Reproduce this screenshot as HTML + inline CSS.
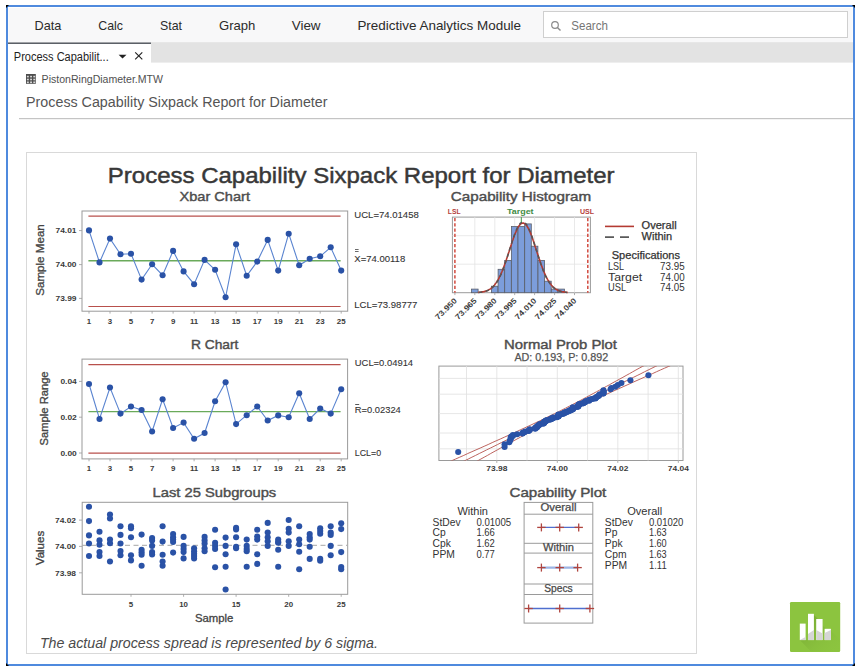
<!DOCTYPE html><html><head><meta charset="utf-8"><style>
html,body{margin:0;padding:0;background:#fff;width:860px;height:671px;overflow:hidden}
svg{display:block}
text{font-family:"Liberation Sans", sans-serif}
</style></head><body>
<svg width="860" height="671" viewBox="0 0 860 671">
<rect x="0" y="0" width="860" height="671" fill="#ffffff"/>
<rect x="8" y="7" width="845" height="36" fill="#ffffff"/><rect x="8.5" y="8" width="844" height="35" fill="#f8f8f9"/>
<rect x="151" y="42.2" width="702" height="20.4" fill="#e3e3e3"/>
<rect x="8" y="42.5" width="143" height="1.4" fill="#4a4f57"/>
<text x="34.5" y="29.5" font-size="13" fill="#2b2b2b" textLength="26.8" lengthAdjust="spacingAndGlyphs">Data</text>
<text x="98.3" y="29.5" font-size="13" fill="#2b2b2b" textLength="24.7" lengthAdjust="spacingAndGlyphs">Calc</text>
<text x="160" y="29.5" font-size="13" fill="#2b2b2b" textLength="22.0" lengthAdjust="spacingAndGlyphs">Stat</text>
<text x="219" y="29.5" font-size="13" fill="#2b2b2b" textLength="36.4" lengthAdjust="spacingAndGlyphs">Graph</text>
<text x="291.7" y="29.5" font-size="13" fill="#2b2b2b" textLength="28.9" lengthAdjust="spacingAndGlyphs">View</text>
<text x="357.4" y="29.5" font-size="13" fill="#2b2b2b" textLength="163.7" lengthAdjust="spacingAndGlyphs">Predictive Analytics Module</text>
<rect x="543.5" y="11.5" width="304" height="26" fill="#ffffff" stroke="#cfcfcf" stroke-width="1"/>
<circle cx="555" cy="25" r="3.3" fill="none" stroke="#8a8a8a" stroke-width="1.2"/><line x1="557.4" y1="27.4" x2="560.5" y2="30.5" stroke="#8a8a8a" stroke-width="1.4"/>
<text x="571.3" y="30.3" font-size="13" fill="#767676" textLength="36.6" lengthAdjust="spacingAndGlyphs">Search</text>
<text x="13.8" y="60.6" font-size="12.5" fill="#1e1e1e" textLength="94.9" lengthAdjust="spacingAndGlyphs">Process Capabilit...</text>
<path d="M118.6 54.7 L126.5 54.7 L122.55 58.5 Z" fill="#222"/>
<path d="M135.2 52.4 L142.3 59.4 M142.3 52.4 L135.2 59.4" stroke="#222" stroke-width="1.15"/>
<rect x="26" y="74" width="9.8" height="9.8" fill="#4d4d4d"/><rect x="26.9" y="75.8" width="1.9" height="1.6" fill="#d8d8d8"/><rect x="26.9" y="78.7" width="1.9" height="1.6" fill="#d8d8d8"/><rect x="26.9" y="81.5" width="1.9" height="1.6" fill="#d8d8d8"/><rect x="30.1" y="75.8" width="1.9" height="1.6" fill="#d8d8d8"/><rect x="30.1" y="78.7" width="1.9" height="1.6" fill="#d8d8d8"/><rect x="30.1" y="81.5" width="1.9" height="1.6" fill="#d8d8d8"/><rect x="33.3" y="75.8" width="1.9" height="1.6" fill="#d8d8d8"/><rect x="33.3" y="78.7" width="1.9" height="1.6" fill="#d8d8d8"/><rect x="33.3" y="81.5" width="1.9" height="1.6" fill="#d8d8d8"/>
<text x="41.6" y="82.8" font-size="11.2" fill="#505050" textLength="121.4" lengthAdjust="spacingAndGlyphs">PistonRingDiameter.MTW</text>
<text x="26.1" y="107.1" font-size="15.2" fill="#555555" textLength="301.4" lengthAdjust="spacingAndGlyphs">Process Capability Sixpack Report for Diameter</text>
<rect x="19" y="118" width="834" height="1.2" fill="#c4c4c4"/>
<rect x="26.5" y="152.5" width="670" height="501" fill="#ffffff" stroke="#d9d9d9" stroke-width="1"/>
<rect x="7" y="6" width="847" height="659" fill="none" stroke="#4f8ade" stroke-width="2"/>
<polygon points="6,5 9,5 6,8" fill="#000"/>
<polygon points="855,5 852,5 855,8" fill="#000"/>
<polygon points="6,666 9,666 6,663" fill="#000"/>
<polygon points="855,666 852,666 855,663" fill="#000"/>
<rect x="790" y="602" width="50.2" height="50" rx="1.2" fill="#8cc43f"/>
<defs><linearGradient id="shd" x1="0" y1="0" x2="1" y2="1"><stop offset="0" stop-color="#6a9a2c" stop-opacity="0.8"/><stop offset="1" stop-color="#8cc43f" stop-opacity="0"/></linearGradient></defs>
<path d="M799.8 640.1 L811 651.5 L840.2 651.5 L840.2 640 L830.9 630.7 L830.9 628.8 L826 628.8 L822.6 625.4 L822.6 619 L818 619 L813.9 614.9 L813.9 640.1 Z" fill="url(#shd)"/>
<rect x="799.8" y="623.6" width="5.8" height="16.5" fill="#ffffff"/>
<rect x="808" y="613.8" width="5.9" height="26.3" fill="#ffffff"/>
<rect x="816.2" y="619" width="6.4" height="21.1" fill="#ffffff"/>
<rect x="824.6" y="628.8" width="6.3" height="11.3" fill="#ffffff"/>
<path d="M799.8 640.1 L805.6 637 L805.6 640.1 Z M808 640.1 L808 634 L813.9 630 L813.9 640.1 Z M816.2 640.1 L816.2 630 L822.6 633.5 L822.6 640.1 Z M824.6 640.1 L824.6 633 L830.9 630 L830.9 640.1 Z" fill="#d5d5d5"/>
<text x="107.8" y="183.3" font-size="22" stroke="#383838" stroke-width="0.45" text-anchor="start" fill="#383838" textLength="506.7" lengthAdjust="spacingAndGlyphs">Process Capability Sixpack Report for Diameter</text>
<text x="179.5" y="201.2" font-size="12.8" stroke="#4d4d4d" stroke-width="0.4" text-anchor="start" fill="#4d4d4d" textLength="70.5" lengthAdjust="spacingAndGlyphs">Xbar Chart</text>
<text x="450.8" y="201.4" font-size="12.8" stroke="#4d4d4d" stroke-width="0.4" text-anchor="start" fill="#4d4d4d" textLength="140.3" lengthAdjust="spacingAndGlyphs">Capability Histogram</text>
<text x="190.9" y="348.7" font-size="12.8" stroke="#4d4d4d" stroke-width="0.4" text-anchor="start" fill="#4d4d4d" textLength="47.5" lengthAdjust="spacingAndGlyphs">R Chart</text>
<text x="504.0" y="348.9" font-size="12.8" stroke="#4d4d4d" stroke-width="0.4" text-anchor="start" fill="#4d4d4d" textLength="113.0" lengthAdjust="spacingAndGlyphs">Normal Prob Plot</text>
<text x="514.4" y="361.0" font-size="10.5" stroke="#555" stroke-width="0.25" text-anchor="start" fill="#555" textLength="93.8" lengthAdjust="spacingAndGlyphs">AD: 0.193, P: 0.892</text>
<text x="152.5" y="496.7" font-size="12.8" stroke="#4d4d4d" stroke-width="0.4" text-anchor="start" fill="#4d4d4d" textLength="123.7" lengthAdjust="spacingAndGlyphs">Last 25 Subgroups</text>
<text x="509.5" y="497.0" font-size="12.8" stroke="#4d4d4d" stroke-width="0.4" text-anchor="start" fill="#4d4d4d" textLength="96.8" lengthAdjust="spacingAndGlyphs">Capability Plot</text>
<rect x="82" y="211" width="265.7" height="100.2" fill="#fff" stroke="#9a9a9a" stroke-width="1"/>
<line x1="88.4" y1="216.1" x2="340.6" y2="216.1" stroke="#b8504c" stroke-width="1.2"/>
<line x1="88.4" y1="306.5" x2="340.6" y2="306.5" stroke="#b8504c" stroke-width="1.2"/>
<line x1="88.4" y1="260.7" x2="340.6" y2="260.7" stroke="#6aaa5a" stroke-width="1.4"/>
<polyline points="89.0,230.4 99.5,262.4 110.0,238.6 120.5,254.2 131.0,253.7 141.6,279.6 152.1,264.3 162.6,275.2 173.1,250.9 183.6,271.4 194.1,284.2 204.6,259.9 215.1,269.8 225.6,297.3 236.1,244.3 246.7,275.8 257.2,261.6 267.7,239.9 278.2,270.6 288.7,233.7 299.2,265.3 309.7,258.8 320.2,256.3 330.7,247.3 341.2,270.6" fill="none" stroke="#5a84d0" stroke-width="1.1"/>
<circle cx="89.0" cy="230.4" r="3.05" fill="#2a52a6"/>
<circle cx="99.5" cy="262.4" r="3.05" fill="#2a52a6"/>
<circle cx="110.0" cy="238.6" r="3.05" fill="#2a52a6"/>
<circle cx="120.5" cy="254.2" r="3.05" fill="#2a52a6"/>
<circle cx="131.0" cy="253.7" r="3.05" fill="#2a52a6"/>
<circle cx="141.6" cy="279.6" r="3.05" fill="#2a52a6"/>
<circle cx="152.1" cy="264.3" r="3.05" fill="#2a52a6"/>
<circle cx="162.6" cy="275.2" r="3.05" fill="#2a52a6"/>
<circle cx="173.1" cy="250.9" r="3.05" fill="#2a52a6"/>
<circle cx="183.6" cy="271.4" r="3.05" fill="#2a52a6"/>
<circle cx="194.1" cy="284.2" r="3.05" fill="#2a52a6"/>
<circle cx="204.6" cy="259.9" r="3.05" fill="#2a52a6"/>
<circle cx="215.1" cy="269.8" r="3.05" fill="#2a52a6"/>
<circle cx="225.6" cy="297.3" r="3.05" fill="#2a52a6"/>
<circle cx="236.1" cy="244.3" r="3.05" fill="#2a52a6"/>
<circle cx="246.7" cy="275.8" r="3.05" fill="#2a52a6"/>
<circle cx="257.2" cy="261.6" r="3.05" fill="#2a52a6"/>
<circle cx="267.7" cy="239.9" r="3.05" fill="#2a52a6"/>
<circle cx="278.2" cy="270.6" r="3.05" fill="#2a52a6"/>
<circle cx="288.7" cy="233.7" r="3.05" fill="#2a52a6"/>
<circle cx="299.2" cy="265.3" r="3.05" fill="#2a52a6"/>
<circle cx="309.7" cy="258.8" r="3.05" fill="#2a52a6"/>
<circle cx="320.2" cy="256.3" r="3.05" fill="#2a52a6"/>
<circle cx="330.7" cy="247.3" r="3.05" fill="#2a52a6"/>
<circle cx="341.2" cy="270.6" r="3.05" fill="#2a52a6"/>
<line x1="79" y1="230.6" x2="82" y2="230.6" stroke="#9a9a9a" stroke-width="0.8"/>
<text x="76.5" y="233.3" font-size="7.9" font-weight="bold" text-anchor="end" fill="#3a3a3a" textLength="21.0" lengthAdjust="spacingAndGlyphs">74.01</text>
<line x1="79" y1="264.6" x2="82" y2="264.6" stroke="#9a9a9a" stroke-width="0.8"/>
<text x="76.5" y="267.3" font-size="7.9" font-weight="bold" text-anchor="end" fill="#3a3a3a" textLength="21.0" lengthAdjust="spacingAndGlyphs">74.00</text>
<line x1="79" y1="298.4" x2="82" y2="298.4" stroke="#9a9a9a" stroke-width="0.8"/>
<text x="76.5" y="301.1" font-size="7.9" font-weight="bold" text-anchor="end" fill="#3a3a3a" textLength="21.0" lengthAdjust="spacingAndGlyphs">73.99</text>
<line x1="89.0" y1="311.2" x2="89.0" y2="313.6" stroke="#9a9a9a" stroke-width="0.8"/>
<text x="89.0" y="324.0" font-size="7.9" font-weight="bold" text-anchor="middle" fill="#3a3a3a">1</text>
<line x1="110.0" y1="311.2" x2="110.0" y2="313.6" stroke="#9a9a9a" stroke-width="0.8"/>
<text x="110.0" y="324.0" font-size="7.9" font-weight="bold" text-anchor="middle" fill="#3a3a3a">3</text>
<line x1="131.0" y1="311.2" x2="131.0" y2="313.6" stroke="#9a9a9a" stroke-width="0.8"/>
<text x="131.0" y="324.0" font-size="7.9" font-weight="bold" text-anchor="middle" fill="#3a3a3a">5</text>
<line x1="152.1" y1="311.2" x2="152.1" y2="313.6" stroke="#9a9a9a" stroke-width="0.8"/>
<text x="152.1" y="324.0" font-size="7.9" font-weight="bold" text-anchor="middle" fill="#3a3a3a">7</text>
<line x1="173.1" y1="311.2" x2="173.1" y2="313.6" stroke="#9a9a9a" stroke-width="0.8"/>
<text x="173.1" y="324.0" font-size="7.9" font-weight="bold" text-anchor="middle" fill="#3a3a3a">9</text>
<line x1="194.1" y1="311.2" x2="194.1" y2="313.6" stroke="#9a9a9a" stroke-width="0.8"/>
<text x="194.1" y="324.0" font-size="7.9" font-weight="bold" text-anchor="middle" fill="#3a3a3a">11</text>
<line x1="215.1" y1="311.2" x2="215.1" y2="313.6" stroke="#9a9a9a" stroke-width="0.8"/>
<text x="215.1" y="324.0" font-size="7.9" font-weight="bold" text-anchor="middle" fill="#3a3a3a">13</text>
<line x1="236.1" y1="311.2" x2="236.1" y2="313.6" stroke="#9a9a9a" stroke-width="0.8"/>
<text x="236.1" y="324.0" font-size="7.9" font-weight="bold" text-anchor="middle" fill="#3a3a3a">15</text>
<line x1="257.2" y1="311.2" x2="257.2" y2="313.6" stroke="#9a9a9a" stroke-width="0.8"/>
<text x="257.2" y="324.0" font-size="7.9" font-weight="bold" text-anchor="middle" fill="#3a3a3a">17</text>
<line x1="278.2" y1="311.2" x2="278.2" y2="313.6" stroke="#9a9a9a" stroke-width="0.8"/>
<text x="278.2" y="324.0" font-size="7.9" font-weight="bold" text-anchor="middle" fill="#3a3a3a">19</text>
<line x1="299.2" y1="311.2" x2="299.2" y2="313.6" stroke="#9a9a9a" stroke-width="0.8"/>
<text x="299.2" y="324.0" font-size="7.9" font-weight="bold" text-anchor="middle" fill="#3a3a3a">21</text>
<line x1="320.2" y1="311.2" x2="320.2" y2="313.6" stroke="#9a9a9a" stroke-width="0.8"/>
<text x="320.2" y="324.0" font-size="7.9" font-weight="bold" text-anchor="middle" fill="#3a3a3a">23</text>
<line x1="341.2" y1="311.2" x2="341.2" y2="313.6" stroke="#9a9a9a" stroke-width="0.8"/>
<text x="341.2" y="324.0" font-size="7.9" font-weight="bold" text-anchor="middle" fill="#3a3a3a">25</text>
<text x="0.0" y="0.0" font-size="10.5" stroke="#444" stroke-width="0.3" text-anchor="middle" fill="#444" textLength="71.6" lengthAdjust="spacingAndGlyphs" transform="translate(44.3,260) rotate(-90)">Sample Mean</text>
<text x="354.3" y="218.0" font-size="9.6" stroke="#333" stroke-width="0.1" text-anchor="start" fill="#333" textLength="64.5" lengthAdjust="spacingAndGlyphs">UCL=74.01458</text>
<text x="354.3" y="262.3" font-size="9.6" stroke="#333" stroke-width="0.1" text-anchor="start" fill="#333" textLength="50.9" lengthAdjust="spacingAndGlyphs">X=74.00118</text>
<line x1="355" y1="251.5" x2="358.6" y2="251.5" stroke="#444" stroke-width="0.8"/><line x1="355" y1="249.5" x2="358.6" y2="249.5" stroke="#444" stroke-width="0.8"/>
<text x="354.3" y="307.5" font-size="9.6" stroke="#333" stroke-width="0.1" text-anchor="start" fill="#333" textLength="63.1" lengthAdjust="spacingAndGlyphs">LCL=73.98777</text>
<rect x="82" y="359.1" width="265.6" height="99.8" fill="#fff" stroke="#9a9a9a" stroke-width="1"/>
<line x1="88.4" y1="364.7" x2="340.6" y2="364.7" stroke="#b8504c" stroke-width="1.2"/>
<line x1="88.4" y1="453.2" x2="340.6" y2="453.2" stroke="#b8504c" stroke-width="1.2"/>
<line x1="88.4" y1="411.6" x2="340.6" y2="411.6" stroke="#6aaa5a" stroke-width="1.4"/>
<polyline points="89.0,384 99.5,419 110.0,387.5 120.5,413.6 131.0,406.5 141.6,410 152.1,431.5 162.6,399.3 173.1,428 183.6,422.6 194.1,438.7 204.6,433 215.1,401.3 225.6,382.2 236.1,424.1 246.7,415.2 257.2,406.5 267.7,420.5 278.2,415.4 288.7,417.2 299.2,393.2 309.7,419 320.2,408.5 330.7,413.6 341.2,389.3" fill="none" stroke="#5a84d0" stroke-width="1.1"/>
<circle cx="89.0" cy="384" r="3.05" fill="#2a52a6"/>
<circle cx="99.5" cy="419" r="3.05" fill="#2a52a6"/>
<circle cx="110.0" cy="387.5" r="3.05" fill="#2a52a6"/>
<circle cx="120.5" cy="413.6" r="3.05" fill="#2a52a6"/>
<circle cx="131.0" cy="406.5" r="3.05" fill="#2a52a6"/>
<circle cx="141.6" cy="410" r="3.05" fill="#2a52a6"/>
<circle cx="152.1" cy="431.5" r="3.05" fill="#2a52a6"/>
<circle cx="162.6" cy="399.3" r="3.05" fill="#2a52a6"/>
<circle cx="173.1" cy="428" r="3.05" fill="#2a52a6"/>
<circle cx="183.6" cy="422.6" r="3.05" fill="#2a52a6"/>
<circle cx="194.1" cy="438.7" r="3.05" fill="#2a52a6"/>
<circle cx="204.6" cy="433" r="3.05" fill="#2a52a6"/>
<circle cx="215.1" cy="401.3" r="3.05" fill="#2a52a6"/>
<circle cx="225.6" cy="382.2" r="3.05" fill="#2a52a6"/>
<circle cx="236.1" cy="424.1" r="3.05" fill="#2a52a6"/>
<circle cx="246.7" cy="415.2" r="3.05" fill="#2a52a6"/>
<circle cx="257.2" cy="406.5" r="3.05" fill="#2a52a6"/>
<circle cx="267.7" cy="420.5" r="3.05" fill="#2a52a6"/>
<circle cx="278.2" cy="415.4" r="3.05" fill="#2a52a6"/>
<circle cx="288.7" cy="417.2" r="3.05" fill="#2a52a6"/>
<circle cx="299.2" cy="393.2" r="3.05" fill="#2a52a6"/>
<circle cx="309.7" cy="419" r="3.05" fill="#2a52a6"/>
<circle cx="320.2" cy="408.5" r="3.05" fill="#2a52a6"/>
<circle cx="330.7" cy="413.6" r="3.05" fill="#2a52a6"/>
<circle cx="341.2" cy="389.3" r="3.05" fill="#2a52a6"/>
<line x1="79" y1="381.4" x2="82" y2="381.4" stroke="#9a9a9a" stroke-width="0.8"/>
<text x="76.8" y="384.1" font-size="7.9" font-weight="bold" text-anchor="end" fill="#3a3a3a" textLength="16.4" lengthAdjust="spacingAndGlyphs">0.04</text>
<line x1="79" y1="417.2" x2="82" y2="417.2" stroke="#9a9a9a" stroke-width="0.8"/>
<text x="76.8" y="419.9" font-size="7.9" font-weight="bold" text-anchor="end" fill="#3a3a3a" textLength="16.4" lengthAdjust="spacingAndGlyphs">0.02</text>
<line x1="79" y1="453" x2="82" y2="453" stroke="#9a9a9a" stroke-width="0.8"/>
<text x="76.8" y="455.7" font-size="7.9" font-weight="bold" text-anchor="end" fill="#3a3a3a" textLength="16.4" lengthAdjust="spacingAndGlyphs">0.00</text>
<line x1="89.0" y1="458.9" x2="89.0" y2="461.3" stroke="#9a9a9a" stroke-width="0.8"/>
<text x="89.0" y="471.2" font-size="7.9" font-weight="bold" text-anchor="middle" fill="#3a3a3a">1</text>
<line x1="110.0" y1="458.9" x2="110.0" y2="461.3" stroke="#9a9a9a" stroke-width="0.8"/>
<text x="110.0" y="471.2" font-size="7.9" font-weight="bold" text-anchor="middle" fill="#3a3a3a">3</text>
<line x1="131.0" y1="458.9" x2="131.0" y2="461.3" stroke="#9a9a9a" stroke-width="0.8"/>
<text x="131.0" y="471.2" font-size="7.9" font-weight="bold" text-anchor="middle" fill="#3a3a3a">5</text>
<line x1="152.1" y1="458.9" x2="152.1" y2="461.3" stroke="#9a9a9a" stroke-width="0.8"/>
<text x="152.1" y="471.2" font-size="7.9" font-weight="bold" text-anchor="middle" fill="#3a3a3a">7</text>
<line x1="173.1" y1="458.9" x2="173.1" y2="461.3" stroke="#9a9a9a" stroke-width="0.8"/>
<text x="173.1" y="471.2" font-size="7.9" font-weight="bold" text-anchor="middle" fill="#3a3a3a">9</text>
<line x1="194.1" y1="458.9" x2="194.1" y2="461.3" stroke="#9a9a9a" stroke-width="0.8"/>
<text x="194.1" y="471.2" font-size="7.9" font-weight="bold" text-anchor="middle" fill="#3a3a3a">11</text>
<line x1="215.1" y1="458.9" x2="215.1" y2="461.3" stroke="#9a9a9a" stroke-width="0.8"/>
<text x="215.1" y="471.2" font-size="7.9" font-weight="bold" text-anchor="middle" fill="#3a3a3a">13</text>
<line x1="236.1" y1="458.9" x2="236.1" y2="461.3" stroke="#9a9a9a" stroke-width="0.8"/>
<text x="236.1" y="471.2" font-size="7.9" font-weight="bold" text-anchor="middle" fill="#3a3a3a">15</text>
<line x1="257.2" y1="458.9" x2="257.2" y2="461.3" stroke="#9a9a9a" stroke-width="0.8"/>
<text x="257.2" y="471.2" font-size="7.9" font-weight="bold" text-anchor="middle" fill="#3a3a3a">17</text>
<line x1="278.2" y1="458.9" x2="278.2" y2="461.3" stroke="#9a9a9a" stroke-width="0.8"/>
<text x="278.2" y="471.2" font-size="7.9" font-weight="bold" text-anchor="middle" fill="#3a3a3a">19</text>
<line x1="299.2" y1="458.9" x2="299.2" y2="461.3" stroke="#9a9a9a" stroke-width="0.8"/>
<text x="299.2" y="471.2" font-size="7.9" font-weight="bold" text-anchor="middle" fill="#3a3a3a">21</text>
<line x1="320.2" y1="458.9" x2="320.2" y2="461.3" stroke="#9a9a9a" stroke-width="0.8"/>
<text x="320.2" y="471.2" font-size="7.9" font-weight="bold" text-anchor="middle" fill="#3a3a3a">23</text>
<line x1="341.2" y1="458.9" x2="341.2" y2="461.3" stroke="#9a9a9a" stroke-width="0.8"/>
<text x="341.2" y="471.2" font-size="7.9" font-weight="bold" text-anchor="middle" fill="#3a3a3a">25</text>
<text x="0.0" y="0.0" font-size="10.5" stroke="#444" stroke-width="0.3" text-anchor="middle" fill="#444" textLength="74.0" lengthAdjust="spacingAndGlyphs" transform="translate(48.3,408.4) rotate(-90)">Sample Range</text>
<text x="354.8" y="366.0" font-size="9.6" stroke="#333" stroke-width="0.1" text-anchor="start" fill="#333" textLength="58.3" lengthAdjust="spacingAndGlyphs">UCL=0.04914</text>
<text x="354.8" y="412.8" font-size="9.6" stroke="#333" stroke-width="0.1" text-anchor="start" fill="#333" textLength="46.0" lengthAdjust="spacingAndGlyphs">R=0.02324</text>
<line x1="355.2" y1="404.5" x2="359.2" y2="404.5" stroke="#444" stroke-width="0.9"/>
<text x="354.8" y="455.5" font-size="9.6" stroke="#333" stroke-width="0.1" text-anchor="start" fill="#333" textLength="26.3" lengthAdjust="spacingAndGlyphs">LCL=0</text>
<rect x="82.2" y="502.3" width="265.5" height="92" fill="#fff" stroke="#9a9a9a" stroke-width="1"/>
<line x1="82.5" y1="545.3" x2="347" y2="545.3" stroke="#a5a5a5" stroke-width="1" stroke-dasharray="5,3.5"/>
<circle cx="89.0" cy="506.7" r="3.05" fill="#2a52a6"/>
<circle cx="89.0" cy="521.1" r="3.05" fill="#2a52a6"/>
<circle cx="89.0" cy="535.4" r="3.05" fill="#2a52a6"/>
<circle cx="89.0" cy="543.5" r="3.05" fill="#2a52a6"/>
<circle cx="89.0" cy="556.0" r="3.05" fill="#2a52a6"/>
<circle cx="99.5" cy="531.8" r="3.05" fill="#2a52a6"/>
<circle cx="99.5" cy="540.4" r="3.05" fill="#2a52a6"/>
<circle cx="99.5" cy="544.8" r="3.05" fill="#2a52a6"/>
<circle cx="99.5" cy="552.1" r="3.05" fill="#2a52a6"/>
<circle cx="99.5" cy="556.0" r="3.05" fill="#2a52a6"/>
<circle cx="110.0" cy="514.6" r="3.05" fill="#2a52a6"/>
<circle cx="110.0" cy="518.5" r="3.05" fill="#2a52a6"/>
<circle cx="110.0" cy="539.6" r="3.05" fill="#2a52a6"/>
<circle cx="110.0" cy="543.2" r="3.05" fill="#2a52a6"/>
<circle cx="110.0" cy="561.5" r="3.05" fill="#2a52a6"/>
<circle cx="120.5" cy="526.3" r="3.05" fill="#2a52a6"/>
<circle cx="120.5" cy="534.9" r="3.05" fill="#2a52a6"/>
<circle cx="120.5" cy="543.5" r="3.05" fill="#2a52a6"/>
<circle cx="120.5" cy="551.0" r="3.05" fill="#2a52a6"/>
<circle cx="120.5" cy="555.3" r="3.05" fill="#2a52a6"/>
<circle cx="131.0" cy="526.3" r="3.05" fill="#2a52a6"/>
<circle cx="131.0" cy="528.2" r="3.05" fill="#2a52a6"/>
<circle cx="131.0" cy="537.3" r="3.05" fill="#2a52a6"/>
<circle cx="131.0" cy="555.3" r="3.05" fill="#2a52a6"/>
<circle cx="131.0" cy="560.4" r="3.05" fill="#2a52a6"/>
<circle cx="141.6" cy="534.6" r="3.05" fill="#2a52a6"/>
<circle cx="141.6" cy="549.8" r="3.05" fill="#2a52a6"/>
<circle cx="141.6" cy="552.3" r="3.05" fill="#2a52a6"/>
<circle cx="141.6" cy="554.8" r="3.05" fill="#2a52a6"/>
<circle cx="141.6" cy="565.7" r="3.05" fill="#2a52a6"/>
<circle cx="152.1" cy="538.0" r="3.05" fill="#2a52a6"/>
<circle cx="152.1" cy="540.4" r="3.05" fill="#2a52a6"/>
<circle cx="152.1" cy="545.9" r="3.05" fill="#2a52a6"/>
<circle cx="152.1" cy="552.1" r="3.05" fill="#2a52a6"/>
<circle cx="152.1" cy="554.5" r="3.05" fill="#2a52a6"/>
<circle cx="162.6" cy="526.3" r="3.05" fill="#2a52a6"/>
<circle cx="162.6" cy="541.6" r="3.05" fill="#2a52a6"/>
<circle cx="162.6" cy="554.8" r="3.05" fill="#2a52a6"/>
<circle cx="162.6" cy="561.5" r="3.05" fill="#2a52a6"/>
<circle cx="162.6" cy="565.7" r="3.05" fill="#2a52a6"/>
<circle cx="173.1" cy="534.1" r="3.05" fill="#2a52a6"/>
<circle cx="173.1" cy="537.3" r="3.05" fill="#2a52a6"/>
<circle cx="173.1" cy="539.6" r="3.05" fill="#2a52a6"/>
<circle cx="173.1" cy="542.0" r="3.05" fill="#2a52a6"/>
<circle cx="173.1" cy="552.6" r="3.05" fill="#2a52a6"/>
<circle cx="183.6" cy="536.9" r="3.05" fill="#2a52a6"/>
<circle cx="183.6" cy="545.9" r="3.05" fill="#2a52a6"/>
<circle cx="183.6" cy="549.0" r="3.05" fill="#2a52a6"/>
<circle cx="183.6" cy="552.1" r="3.05" fill="#2a52a6"/>
<circle cx="183.6" cy="558.4" r="3.05" fill="#2a52a6"/>
<circle cx="194.1" cy="548.2" r="3.05" fill="#2a52a6"/>
<circle cx="194.1" cy="551.3" r="3.05" fill="#2a52a6"/>
<circle cx="194.1" cy="553.7" r="3.05" fill="#2a52a6"/>
<circle cx="194.1" cy="556.0" r="3.05" fill="#2a52a6"/>
<circle cx="194.1" cy="558.4" r="3.05" fill="#2a52a6"/>
<circle cx="204.6" cy="536.9" r="3.05" fill="#2a52a6"/>
<circle cx="204.6" cy="540.4" r="3.05" fill="#2a52a6"/>
<circle cx="204.6" cy="543.5" r="3.05" fill="#2a52a6"/>
<circle cx="204.6" cy="548.2" r="3.05" fill="#2a52a6"/>
<circle cx="204.6" cy="551.3" r="3.05" fill="#2a52a6"/>
<circle cx="215.1" cy="529.7" r="3.05" fill="#2a52a6"/>
<circle cx="215.1" cy="542.7" r="3.05" fill="#2a52a6"/>
<circle cx="215.1" cy="545.9" r="3.05" fill="#2a52a6"/>
<circle cx="215.1" cy="549.0" r="3.05" fill="#2a52a6"/>
<circle cx="215.1" cy="567.3" r="3.05" fill="#2a52a6"/>
<circle cx="225.6" cy="537.6" r="3.05" fill="#2a52a6"/>
<circle cx="225.6" cy="545.9" r="3.05" fill="#2a52a6"/>
<circle cx="225.6" cy="554.2" r="3.05" fill="#2a52a6"/>
<circle cx="225.6" cy="566.7" r="3.05" fill="#2a52a6"/>
<circle cx="225.6" cy="589.5" r="3.05" fill="#2a52a6"/>
<circle cx="236.1" cy="527.9" r="3.05" fill="#2a52a6"/>
<circle cx="236.1" cy="529.4" r="3.05" fill="#2a52a6"/>
<circle cx="236.1" cy="537.3" r="3.05" fill="#2a52a6"/>
<circle cx="236.1" cy="546.7" r="3.05" fill="#2a52a6"/>
<circle cx="236.1" cy="548.2" r="3.05" fill="#2a52a6"/>
<circle cx="246.7" cy="539.6" r="3.05" fill="#2a52a6"/>
<circle cx="246.7" cy="545.9" r="3.05" fill="#2a52a6"/>
<circle cx="246.7" cy="549.0" r="3.05" fill="#2a52a6"/>
<circle cx="246.7" cy="551.3" r="3.05" fill="#2a52a6"/>
<circle cx="246.7" cy="566.7" r="3.05" fill="#2a52a6"/>
<circle cx="257.2" cy="529.7" r="3.05" fill="#2a52a6"/>
<circle cx="257.2" cy="536.5" r="3.05" fill="#2a52a6"/>
<circle cx="257.2" cy="539.6" r="3.05" fill="#2a52a6"/>
<circle cx="257.2" cy="554.2" r="3.05" fill="#2a52a6"/>
<circle cx="257.2" cy="563.9" r="3.05" fill="#2a52a6"/>
<circle cx="267.7" cy="522.9" r="3.05" fill="#2a52a6"/>
<circle cx="267.7" cy="532.6" r="3.05" fill="#2a52a6"/>
<circle cx="267.7" cy="537.3" r="3.05" fill="#2a52a6"/>
<circle cx="267.7" cy="541.2" r="3.05" fill="#2a52a6"/>
<circle cx="267.7" cy="545.9" r="3.05" fill="#2a52a6"/>
<circle cx="278.2" cy="539.6" r="3.05" fill="#2a52a6"/>
<circle cx="278.2" cy="542.0" r="3.05" fill="#2a52a6"/>
<circle cx="278.2" cy="542.7" r="3.05" fill="#2a52a6"/>
<circle cx="278.2" cy="549.8" r="3.05" fill="#2a52a6"/>
<circle cx="278.2" cy="566.7" r="3.05" fill="#2a52a6"/>
<circle cx="288.7" cy="520.0" r="3.05" fill="#2a52a6"/>
<circle cx="288.7" cy="528.7" r="3.05" fill="#2a52a6"/>
<circle cx="288.7" cy="532.6" r="3.05" fill="#2a52a6"/>
<circle cx="288.7" cy="541.2" r="3.05" fill="#2a52a6"/>
<circle cx="288.7" cy="545.9" r="3.05" fill="#2a52a6"/>
<circle cx="299.2" cy="526.3" r="3.05" fill="#2a52a6"/>
<circle cx="299.2" cy="539.6" r="3.05" fill="#2a52a6"/>
<circle cx="299.2" cy="544.3" r="3.05" fill="#2a52a6"/>
<circle cx="299.2" cy="551.7" r="3.05" fill="#2a52a6"/>
<circle cx="299.2" cy="569.3" r="3.05" fill="#2a52a6"/>
<circle cx="309.7" cy="534.1" r="3.05" fill="#2a52a6"/>
<circle cx="309.7" cy="537.3" r="3.05" fill="#2a52a6"/>
<circle cx="309.7" cy="539.6" r="3.05" fill="#2a52a6"/>
<circle cx="309.7" cy="546.7" r="3.05" fill="#2a52a6"/>
<circle cx="309.7" cy="558.9" r="3.05" fill="#2a52a6"/>
<circle cx="320.2" cy="528.2" r="3.05" fill="#2a52a6"/>
<circle cx="320.2" cy="531.0" r="3.05" fill="#2a52a6"/>
<circle cx="320.2" cy="533.8" r="3.05" fill="#2a52a6"/>
<circle cx="320.2" cy="558.9" r="3.05" fill="#2a52a6"/>
<circle cx="320.2" cy="560.7" r="3.05" fill="#2a52a6"/>
<circle cx="330.7" cy="526.3" r="3.05" fill="#2a52a6"/>
<circle cx="330.7" cy="532.6" r="3.05" fill="#2a52a6"/>
<circle cx="330.7" cy="534.9" r="3.05" fill="#2a52a6"/>
<circle cx="330.7" cy="545.9" r="3.05" fill="#2a52a6"/>
<circle cx="330.7" cy="555.3" r="3.05" fill="#2a52a6"/>
<circle cx="341.2" cy="523.2" r="3.05" fill="#2a52a6"/>
<circle cx="341.2" cy="529.1" r="3.05" fill="#2a52a6"/>
<circle cx="341.2" cy="552.1" r="3.05" fill="#2a52a6"/>
<circle cx="341.2" cy="567.0" r="3.05" fill="#2a52a6"/>
<circle cx="341.2" cy="569.3" r="3.05" fill="#2a52a6"/>
<line x1="79" y1="520.1" x2="82" y2="520.1" stroke="#9a9a9a" stroke-width="0.8"/>
<text x="76.0" y="522.8" font-size="7.9" font-weight="bold" text-anchor="end" fill="#3a3a3a" textLength="21.0" lengthAdjust="spacingAndGlyphs">74.02</text>
<line x1="79" y1="546.4" x2="82" y2="546.4" stroke="#9a9a9a" stroke-width="0.8"/>
<text x="76.0" y="549.1" font-size="7.9" font-weight="bold" text-anchor="end" fill="#3a3a3a" textLength="21.0" lengthAdjust="spacingAndGlyphs">74.00</text>
<line x1="79" y1="572.8" x2="82" y2="572.8" stroke="#9a9a9a" stroke-width="0.8"/>
<text x="76.0" y="575.5" font-size="7.9" font-weight="bold" text-anchor="end" fill="#3a3a3a" textLength="21.0" lengthAdjust="spacingAndGlyphs">73.98</text>
<line x1="131.0" y1="594.4" x2="131.0" y2="596.8" stroke="#9a9a9a" stroke-width="0.8"/>
<text x="131.0" y="606.6" font-size="7.9" font-weight="bold" text-anchor="middle" fill="#3a3a3a">5</text>
<line x1="183.6" y1="594.4" x2="183.6" y2="596.8" stroke="#9a9a9a" stroke-width="0.8"/>
<text x="183.6" y="606.6" font-size="7.9" font-weight="bold" text-anchor="middle" fill="#3a3a3a">10</text>
<line x1="236.1" y1="594.4" x2="236.1" y2="596.8" stroke="#9a9a9a" stroke-width="0.8"/>
<text x="236.1" y="606.6" font-size="7.9" font-weight="bold" text-anchor="middle" fill="#3a3a3a">15</text>
<line x1="288.7" y1="594.4" x2="288.7" y2="596.8" stroke="#9a9a9a" stroke-width="0.8"/>
<text x="288.7" y="606.6" font-size="7.9" font-weight="bold" text-anchor="middle" fill="#3a3a3a">20</text>
<line x1="341.2" y1="594.4" x2="341.2" y2="596.8" stroke="#9a9a9a" stroke-width="0.8"/>
<text x="341.2" y="606.6" font-size="7.9" font-weight="bold" text-anchor="middle" fill="#3a3a3a">25</text>
<text x="214.2" y="622.0" font-size="10.5" stroke="#444" stroke-width="0.3" text-anchor="middle" fill="#444" textLength="38.5" lengthAdjust="spacingAndGlyphs">Sample</text>
<text x="0.0" y="0.0" font-size="10.5" stroke="#444" stroke-width="0.3" text-anchor="middle" fill="#444" textLength="34.4" lengthAdjust="spacingAndGlyphs" transform="translate(44,548) rotate(-90)">Values</text>
<text x="39.9" y="647.5" font-size="14.3" text-anchor="start" fill="#4a4a4a" textLength="338.0" lengthAdjust="spacingAndGlyphs" font-style="italic">The actual process spread is represented by 6 sigma.</text>
<rect x="452.4" y="217.1" width="138.0" height="75.6" fill="#fff" stroke="#9a9a9a" stroke-width="1"/>
<line x1="474.8" y1="217.1" x2="474.8" y2="292.7" stroke="#e3e3e3" stroke-width="0.8"/>
<line x1="494.8" y1="217.1" x2="494.8" y2="292.7" stroke="#e3e3e3" stroke-width="0.8"/>
<line x1="514.7" y1="217.1" x2="514.7" y2="292.7" stroke="#e3e3e3" stroke-width="0.8"/>
<line x1="534.6" y1="217.1" x2="534.6" y2="292.7" stroke="#e3e3e3" stroke-width="0.8"/>
<line x1="554.6" y1="217.1" x2="554.6" y2="292.7" stroke="#e3e3e3" stroke-width="0.8"/>
<line x1="574.5" y1="217.1" x2="574.5" y2="292.7" stroke="#e3e3e3" stroke-width="0.8"/>
<line x1="452.4" y1="264.2" x2="590.4" y2="264.2" stroke="#e3e3e3" stroke-width="0.8"/>
<line x1="452.4" y1="235.7" x2="590.4" y2="235.7" stroke="#e3e3e3" stroke-width="0.8"/>
<rect x="471.5" y="289.1" width="6.6" height="3.6" fill="#7c9ddb" stroke="#5a5f6a" stroke-width="0.8"/>
<rect x="491.4" y="286.2" width="6.6" height="6.5" fill="#7c9ddb" stroke="#5a5f6a" stroke-width="0.8"/>
<rect x="498.1" y="269.3" width="6.6" height="23.4" fill="#7c9ddb" stroke="#5a5f6a" stroke-width="0.8"/>
<rect x="504.7" y="260.4" width="6.6" height="32.3" fill="#7c9ddb" stroke="#5a5f6a" stroke-width="0.8"/>
<rect x="511.4" y="226.5" width="6.6" height="66.2" fill="#7c9ddb" stroke="#5a5f6a" stroke-width="0.8"/>
<rect x="518.0" y="226.5" width="6.6" height="66.2" fill="#7c9ddb" stroke="#5a5f6a" stroke-width="0.8"/>
<rect x="524.7" y="223.9" width="6.6" height="68.8" fill="#7c9ddb" stroke="#5a5f6a" stroke-width="0.8"/>
<rect x="531.3" y="246.2" width="6.6" height="46.5" fill="#7c9ddb" stroke="#5a5f6a" stroke-width="0.8"/>
<rect x="538.0" y="260.4" width="6.6" height="32.3" fill="#7c9ddb" stroke="#5a5f6a" stroke-width="0.8"/>
<rect x="544.6" y="281.2" width="6.6" height="11.5" fill="#7c9ddb" stroke="#5a5f6a" stroke-width="0.8"/>
<rect x="551.3" y="289.1" width="6.6" height="3.6" fill="#7c9ddb" stroke="#5a5f6a" stroke-width="0.8"/>
<rect x="557.9" y="289.1" width="6.6" height="3.6" fill="#7c9ddb" stroke="#5a5f6a" stroke-width="0.8"/>
<polyline points="478.2,292.4 478.6,292.4 479.1,292.3 479.5,292.3 480.0,292.2 480.4,292.2 480.9,292.1 481.3,292.1 481.8,292.0 482.2,291.9 482.7,291.9 483.1,291.8 483.6,291.7 484.0,291.6 484.4,291.5 484.9,291.3 485.3,291.2 485.8,291.1 486.2,290.9 486.7,290.7 487.1,290.6 487.6,290.4 488.0,290.2 488.5,289.9 488.9,289.7 489.4,289.4 489.8,289.2 490.3,288.9 490.7,288.6 491.2,288.2 491.6,287.9 492.1,287.5 492.5,287.1 492.9,286.7 493.4,286.2 493.8,285.7 494.3,285.2 494.7,284.7 495.2,284.1 495.6,283.5 496.1,282.9 496.5,282.2 497.0,281.5 497.4,280.8 497.9,280.1 498.3,279.3 498.8,278.5 499.2,277.6 499.7,276.7 500.1,275.8 500.6,274.8 501.0,273.9 501.4,272.8 501.9,271.8 502.3,270.7 502.8,269.6 503.2,268.4 503.7,267.2 504.1,266.0 504.6,264.8 505.0,263.5 505.5,262.3 505.9,261.0 506.4,259.6 506.8,258.3 507.3,256.9 507.7,255.6 508.2,254.2 508.6,252.8 509.1,251.4 509.5,250.0 509.9,248.6 510.4,247.2 510.8,245.9 511.3,244.5 511.7,243.1 512.2,241.8 512.6,240.5 513.1,239.2 513.5,237.9 514.0,236.7 514.4,235.5 514.9,234.3 515.3,233.2 515.8,232.1 516.2,231.1 516.7,230.1 517.1,229.2 517.6,228.3 518.0,227.5 518.4,226.7 518.9,226.0 519.3,225.4 519.8,224.9 520.2,224.4 520.7,224.0 521.1,223.6 521.6,223.4 522.0,223.2 522.5,223.1 522.9,223.0 523.4,223.1 523.8,223.2 524.3,223.4 524.7,223.6 525.2,224.0 525.6,224.4 526.0,224.9 526.5,225.4 526.9,226.0 527.4,226.7 527.8,227.5 528.3,228.3 528.7,229.2 529.2,230.1 529.6,231.1 530.1,232.1 530.5,233.2 531.0,234.3 531.4,235.5 531.9,236.7 532.3,237.9 532.8,239.2 533.2,240.5 533.7,241.8 534.1,243.1 534.5,244.5 535.0,245.9 535.4,247.2 535.9,248.6 536.3,250.0 536.8,251.4 537.2,252.8 537.7,254.2 538.1,255.6 538.6,256.9 539.0,258.3 539.5,259.6 539.9,261.0 540.4,262.3 540.8,263.5 541.3,264.8 541.7,266.0 542.2,267.2 542.6,268.4 543.0,269.6 543.5,270.7 543.9,271.8 544.4,272.8 544.8,273.9 545.3,274.8 545.7,275.8 546.2,276.7 546.6,277.6 547.1,278.5 547.5,279.3 548.0,280.1 548.4,280.8 548.9,281.5 549.3,282.2 549.8,282.9 550.2,283.5 550.7,284.1 551.1,284.7 551.5,285.2 552.0,285.7 552.4,286.2 552.9,286.7 553.3,287.1 553.8,287.5 554.2,287.9 554.7,288.2 555.1,288.6 555.6,288.9 556.0,289.2 556.5,289.4 556.9,289.7 557.4,289.9 557.8,290.2 558.3,290.4 558.7,290.6 559.2,290.7 559.6,290.9 560.0,291.1 560.5,291.2 560.9,291.3 561.4,291.5 561.8,291.6 562.3,291.7 562.7,291.8 563.2,291.9 563.6,291.9 564.1,292.0 564.5,292.1 565.0,292.1 565.4,292.2 565.9,292.2 566.3,292.3 566.8,292.3 567.2,292.4 567.7,292.4" fill="none" stroke="#b43a32" stroke-width="1.6"/>
<polyline points="478.8,292.4 479.3,292.4 479.7,292.3 480.2,292.3 480.6,292.2 481.0,292.2 481.5,292.1 481.9,292.1 482.4,292.0 482.8,291.9 483.2,291.8 483.7,291.8 484.1,291.7 484.6,291.6 485.0,291.4 485.5,291.3 485.9,291.2 486.3,291.0 486.8,290.9 487.2,290.7 487.7,290.5 488.1,290.3 488.5,290.1 489.0,289.9 489.4,289.7 489.9,289.4 490.3,289.1 490.7,288.8 491.2,288.5 491.6,288.2 492.1,287.8 492.5,287.4 492.9,287.0 493.4,286.6 493.8,286.1 494.3,285.6 494.7,285.1 495.2,284.6 495.6,284.0 496.0,283.4 496.5,282.7 496.9,282.1 497.4,281.4 497.8,280.6 498.2,279.9 498.7,279.1 499.1,278.2 499.6,277.4 500.0,276.5 500.4,275.5 500.9,274.6 501.3,273.6 501.8,272.5 502.2,271.5 502.6,270.4 503.1,269.2 503.5,268.1 504.0,266.9 504.4,265.6 504.8,264.4 505.3,263.1 505.7,261.8 506.2,260.5 506.6,259.1 507.1,257.8 507.5,256.4 507.9,255.0 508.4,253.6 508.8,252.2 509.3,250.8 509.7,249.4 510.1,248.0 510.6,246.6 511.0,245.2 511.5,243.8 511.9,242.4 512.3,241.0 512.8,239.7 513.2,238.4 513.7,237.1 514.1,235.8 514.5,234.6 515.0,233.4 515.4,232.3 515.9,231.2 516.3,230.1 516.7,229.1 517.2,228.2 517.6,227.3 518.1,226.5 518.5,225.7 519.0,225.0 519.4,224.4 519.8,223.9 520.3,223.4 520.7,222.9 521.2,222.6 521.6,222.3 522.0,222.1 522.5,222.0 522.9,222.0 523.4,222.0 523.8,222.1 524.2,222.3 524.7,222.6 525.1,222.9 525.6,223.4 526.0,223.9 526.4,224.4 526.9,225.0 527.3,225.7 527.8,226.5 528.2,227.3 528.6,228.2 529.1,229.1 529.5,230.1 530.0,231.2 530.4,232.3 530.9,233.4 531.3,234.6 531.7,235.8 532.2,237.1 532.6,238.4 533.1,239.7 533.5,241.0 533.9,242.4 534.4,243.8 534.8,245.2 535.3,246.6 535.7,248.0 536.1,249.4 536.6,250.8 537.0,252.2 537.5,253.6 537.9,255.0 538.3,256.4 538.8,257.8 539.2,259.1 539.7,260.5 540.1,261.8 540.5,263.1 541.0,264.4 541.4,265.6 541.9,266.9 542.3,268.1 542.8,269.2 543.2,270.4 543.6,271.5 544.1,272.5 544.5,273.6 545.0,274.6 545.4,275.5 545.8,276.5 546.3,277.4 546.7,278.2 547.2,279.1 547.6,279.9 548.0,280.6 548.5,281.4 548.9,282.1 549.4,282.7 549.8,283.4 550.2,284.0 550.7,284.6 551.1,285.1 551.6,285.6 552.0,286.1 552.4,286.6 552.9,287.0 553.3,287.4 553.8,287.8 554.2,288.2 554.7,288.5 555.1,288.8 555.5,289.1 556.0,289.4 556.4,289.7 556.9,289.9 557.3,290.1 557.7,290.3 558.2,290.5 558.6,290.7 559.1,290.9 559.5,291.0 559.9,291.2 560.4,291.3 560.8,291.4 561.3,291.6 561.7,291.7 562.1,291.8 562.6,291.8 563.0,291.9 563.5,292.0 563.9,292.1 564.3,292.1 564.8,292.2 565.2,292.2 565.7,292.3 566.1,292.3 566.6,292.4 567.0,292.4" fill="none" stroke="#555555" stroke-width="1.5" stroke-dasharray="3.5,3.5"/>
<line x1="454.9" y1="218.1" x2="454.9" y2="292.7" stroke="#d24a3e" stroke-width="1.5" stroke-dasharray="3.2,2"/>
<line x1="587.8" y1="218.1" x2="587.8" y2="292.7" stroke="#d24a3e" stroke-width="1.5" stroke-dasharray="3.2,2"/>
<line x1="521.3" y1="217.1" x2="521.3" y2="222.1" stroke="#3f9a45" stroke-width="1"/>
<text x="447.8" y="213.8" font-size="7.5" font-weight="bold" text-anchor="start" fill="#b5403a" textLength="12.7" lengthAdjust="spacingAndGlyphs">LSL</text>
<text x="507.0" y="213.8" font-size="7.5" font-weight="bold" text-anchor="start" fill="#3f8c45" textLength="26.6" lengthAdjust="spacingAndGlyphs">Target</text>
<text x="579.9" y="213.8" font-size="7.5" font-weight="bold" text-anchor="start" fill="#b5403a" textLength="14.1" lengthAdjust="spacingAndGlyphs">USL</text>
<line x1="454.9" y1="292.7" x2="454.9" y2="295.09999999999997" stroke="#9a9a9a" stroke-width="0.8"/>
<text x="0.0" y="0.0" font-size="7.8" font-weight="bold" text-anchor="end" fill="#3a3a3a" textLength="27.0" lengthAdjust="spacingAndGlyphs" transform="translate(457.4,301.2) rotate(-45)">73.950</text>
<line x1="474.8" y1="292.7" x2="474.8" y2="295.09999999999997" stroke="#9a9a9a" stroke-width="0.8"/>
<text x="0.0" y="0.0" font-size="7.8" font-weight="bold" text-anchor="end" fill="#3a3a3a" textLength="27.0" lengthAdjust="spacingAndGlyphs" transform="translate(477.3,301.2) rotate(-45)">73.965</text>
<line x1="494.8" y1="292.7" x2="494.8" y2="295.09999999999997" stroke="#9a9a9a" stroke-width="0.8"/>
<text x="0.0" y="0.0" font-size="7.8" font-weight="bold" text-anchor="end" fill="#3a3a3a" textLength="27.0" lengthAdjust="spacingAndGlyphs" transform="translate(497.3,301.2) rotate(-45)">73.980</text>
<line x1="514.7" y1="292.7" x2="514.7" y2="295.09999999999997" stroke="#9a9a9a" stroke-width="0.8"/>
<text x="0.0" y="0.0" font-size="7.8" font-weight="bold" text-anchor="end" fill="#3a3a3a" textLength="27.0" lengthAdjust="spacingAndGlyphs" transform="translate(517.2,301.2) rotate(-45)">73.995</text>
<line x1="534.6" y1="292.7" x2="534.6" y2="295.09999999999997" stroke="#9a9a9a" stroke-width="0.8"/>
<text x="0.0" y="0.0" font-size="7.8" font-weight="bold" text-anchor="end" fill="#3a3a3a" textLength="27.0" lengthAdjust="spacingAndGlyphs" transform="translate(537.1,301.2) rotate(-45)">74.010</text>
<line x1="554.6" y1="292.7" x2="554.6" y2="295.09999999999997" stroke="#9a9a9a" stroke-width="0.8"/>
<text x="0.0" y="0.0" font-size="7.8" font-weight="bold" text-anchor="end" fill="#3a3a3a" textLength="27.0" lengthAdjust="spacingAndGlyphs" transform="translate(557.1,301.2) rotate(-45)">74.025</text>
<line x1="574.5" y1="292.7" x2="574.5" y2="295.09999999999997" stroke="#9a9a9a" stroke-width="0.8"/>
<text x="0.0" y="0.0" font-size="7.8" font-weight="bold" text-anchor="end" fill="#3a3a3a" textLength="27.0" lengthAdjust="spacingAndGlyphs" transform="translate(577.0,301.2) rotate(-45)">74.040</text>
<line x1="605" y1="226.4" x2="634" y2="226.4" stroke="#b43a32" stroke-width="1.6"/>
<line x1="605" y1="237.1" x2="634" y2="237.1" stroke="#5a5a5a" stroke-width="1.6" stroke-dasharray="9,6"/>
<text x="641.6" y="229.3" font-size="10" stroke="#333" stroke-width="0.25" text-anchor="start" fill="#333" textLength="35.0" lengthAdjust="spacingAndGlyphs">Overall</text>
<text x="641.6" y="240.0" font-size="10" stroke="#333" stroke-width="0.25" text-anchor="start" fill="#333" textLength="30.5" lengthAdjust="spacingAndGlyphs">Within</text>
<text x="611.7" y="259.2" font-size="10" stroke="#333" stroke-width="0.25" text-anchor="start" fill="#333" textLength="68.3" lengthAdjust="spacingAndGlyphs">Specifications</text>
<text x="608.0" y="269.9" font-size="10.3" text-anchor="start" fill="#333" textLength="16.1" lengthAdjust="spacingAndGlyphs">LSL</text>
<text x="684.6" y="269.9" font-size="10.3" text-anchor="end" fill="#333" textLength="24.5" lengthAdjust="spacingAndGlyphs">73.95</text>
<text x="608.0" y="280.6" font-size="10.3" text-anchor="start" fill="#333" textLength="34.2" lengthAdjust="spacingAndGlyphs">Target</text>
<text x="684.6" y="280.6" font-size="10.3" text-anchor="end" fill="#333" textLength="24.5" lengthAdjust="spacingAndGlyphs">74.00</text>
<text x="608.0" y="291.3" font-size="10.3" text-anchor="start" fill="#333" textLength="18.1" lengthAdjust="spacingAndGlyphs">USL</text>
<text x="684.6" y="291.3" font-size="10.3" text-anchor="end" fill="#333" textLength="24.5" lengthAdjust="spacingAndGlyphs">74.05</text>
<rect x="438.9" y="366.1" width="244.1" height="94.4" fill="#fff" stroke="#9a9a9a" stroke-width="1"/>
<clipPath id="nclip"><rect x="438.9" y="366.1" width="244.1" height="94.4"/></clipPath>
<line x1="466.5" y1="366.1" x2="466.5" y2="460.5" stroke="#e0e0e0" stroke-width="0.8"/>
<line x1="496.8" y1="366.1" x2="496.8" y2="460.5" stroke="#e0e0e0" stroke-width="0.8"/>
<line x1="527.0" y1="366.1" x2="527.0" y2="460.5" stroke="#e0e0e0" stroke-width="0.8"/>
<line x1="557.3" y1="366.1" x2="557.3" y2="460.5" stroke="#e0e0e0" stroke-width="0.8"/>
<line x1="587.6" y1="366.1" x2="587.6" y2="460.5" stroke="#e0e0e0" stroke-width="0.8"/>
<line x1="617.8" y1="366.1" x2="617.8" y2="460.5" stroke="#e0e0e0" stroke-width="0.8"/>
<line x1="648.1" y1="366.1" x2="648.1" y2="460.5" stroke="#e0e0e0" stroke-width="0.8"/>
<line x1="678.3" y1="366.1" x2="678.3" y2="460.5" stroke="#e0e0e0" stroke-width="0.8"/>
<line x1="438.9" y1="378.4" x2="683" y2="378.4" stroke="#e0e0e0" stroke-width="0.8"/>
<line x1="438.9" y1="394.2" x2="683" y2="394.2" stroke="#e0e0e0" stroke-width="0.8"/>
<line x1="438.9" y1="413.6" x2="683" y2="413.6" stroke="#e0e0e0" stroke-width="0.8"/>
<line x1="438.9" y1="433.0" x2="683" y2="433.0" stroke="#e0e0e0" stroke-width="0.8"/>
<line x1="438.9" y1="448.8" x2="683" y2="448.8" stroke="#e0e0e0" stroke-width="0.8"/>
<g clip-path="url(#nclip)">
<polyline points="435.1,468.1 439.2,466.3 443.3,464.4 447.4,462.6 451.5,460.8 455.6,459.0 459.7,457.2 463.8,455.4 467.8,453.5 471.9,451.7 476.0,449.9 480.1,448.1 484.1,446.3 488.2,444.5 492.2,442.6 496.2,440.8 500.3,439.0 504.3,437.2 508.3,435.4 512.3,433.6 516.3,431.8 520.2,429.9 524.2,428.1 528.1,426.3 532.0,424.5 535.8,422.7 539.7,420.9 543.5,419.0 547.2,417.2 551.0,415.4 554.7,413.6 558.3,411.8 561.9,410.0 565.5,408.2 569.1,406.3 572.6,404.5 576.0,402.7 579.5,400.9 582.9,399.1 586.3,397.3 589.7,395.4 593.1,393.6 596.4,391.8 599.8,390.0 603.1,388.2 606.4,386.4 609.7,384.6 613.0,382.7 616.3,380.9 619.6,379.1 622.9,377.3 626.1,375.5 629.4,373.7 632.7,371.8 635.9,370.0 639.2,368.2 642.5,366.4 645.7,364.6 649.0,362.8 652.2,360.9 655.5,359.1" fill="none" stroke="#b5524d" stroke-width="0.9"/>
<polyline points="449.9,468.1 453.6,466.3 457.3,464.4 460.9,462.6 464.6,460.8 468.3,459.0 471.9,457.2 475.6,455.4 479.3,453.5 483.0,451.7 486.6,449.9 490.3,448.1 494.0,446.3 497.6,444.5 501.3,442.6 505.0,440.8 508.7,439.0 512.3,437.2 516.0,435.4 519.7,433.6 523.3,431.8 527.0,429.9 530.7,428.1 534.4,426.3 538.0,424.5 541.7,422.7 545.4,420.9 549.1,419.0 552.7,417.2 556.4,415.4 560.1,413.6 563.7,411.8 567.4,410.0 571.1,408.2 574.8,406.3 578.4,404.5 582.1,402.7 585.8,400.9 589.4,399.1 593.1,397.3 596.8,395.4 600.5,393.6 604.1,391.8 607.8,390.0 611.5,388.2 615.1,386.4 618.8,384.6 622.5,382.7 626.2,380.9 629.8,379.1 633.5,377.3 637.2,375.5 640.9,373.7 644.5,371.8 648.2,370.0 651.9,368.2 655.5,366.4 659.2,364.6 662.9,362.8 666.6,360.9 670.2,359.1" fill="none" stroke="#b5524d" stroke-width="0.9"/>
<polyline points="464.7,468.1 467.9,466.3 471.2,464.4 474.4,462.6 477.7,460.8 480.9,459.0 484.2,457.2 487.5,455.4 490.7,453.5 494.0,451.7 497.3,449.9 500.5,448.1 503.8,446.3 507.1,444.5 510.4,442.6 513.7,440.8 517.0,439.0 520.4,437.2 523.7,435.4 527.1,433.6 530.4,431.8 533.8,429.9 537.2,428.1 540.6,426.3 544.1,424.5 547.6,422.7 551.1,420.9 554.6,419.0 558.2,417.2 561.8,415.4 565.5,413.6 569.2,411.8 572.9,410.0 576.7,408.2 580.5,406.3 584.3,404.5 588.2,402.7 592.1,400.9 596.0,399.1 599.9,397.3 603.9,395.4 607.8,393.6 611.8,391.8 615.8,390.0 619.9,388.2 623.9,386.4 627.9,384.6 632.0,382.7 636.0,380.9 640.1,379.1 644.1,377.3 648.2,375.5 652.3,373.7 656.4,371.8 660.4,370.0 664.5,368.2 668.6,366.4 672.7,364.6 676.8,362.8 680.9,360.9 685.0,359.1" fill="none" stroke="#b5524d" stroke-width="0.9"/>
<circle cx="458.2" cy="452.0" r="3.05" fill="#2a52a6"/>
<circle cx="504.6" cy="447.0" r="3.05" fill="#2a52a6"/>
<circle cx="504.6" cy="444.2" r="3.05" fill="#2a52a6"/>
<circle cx="509.3" cy="442.2" r="3.05" fill="#2a52a6"/>
<circle cx="510.0" cy="440.5" r="3.05" fill="#2a52a6"/>
<circle cx="510.7" cy="439.2" r="3.05" fill="#2a52a6"/>
<circle cx="510.7" cy="438.0" r="3.05" fill="#2a52a6"/>
<circle cx="510.7" cy="436.9" r="3.05" fill="#2a52a6"/>
<circle cx="512.9" cy="436.0" r="3.05" fill="#2a52a6"/>
<circle cx="512.9" cy="435.1" r="3.05" fill="#2a52a6"/>
<circle cx="517.2" cy="434.3" r="3.05" fill="#2a52a6"/>
<circle cx="522.6" cy="433.6" r="3.05" fill="#2a52a6"/>
<circle cx="522.6" cy="432.9" r="3.05" fill="#2a52a6"/>
<circle cx="524.4" cy="432.2" r="3.05" fill="#2a52a6"/>
<circle cx="525.1" cy="431.6" r="3.05" fill="#2a52a6"/>
<circle cx="528.7" cy="431.0" r="3.05" fill="#2a52a6"/>
<circle cx="528.7" cy="430.4" r="3.05" fill="#2a52a6"/>
<circle cx="529.8" cy="429.9" r="3.05" fill="#2a52a6"/>
<circle cx="529.8" cy="429.3" r="3.05" fill="#2a52a6"/>
<circle cx="535.2" cy="428.8" r="3.05" fill="#2a52a6"/>
<circle cx="535.2" cy="428.3" r="3.05" fill="#2a52a6"/>
<circle cx="535.2" cy="427.9" r="3.05" fill="#2a52a6"/>
<circle cx="536.9" cy="427.4" r="3.05" fill="#2a52a6"/>
<circle cx="536.9" cy="426.9" r="3.05" fill="#2a52a6"/>
<circle cx="536.9" cy="426.5" r="3.05" fill="#2a52a6"/>
<circle cx="538.0" cy="426.1" r="3.05" fill="#2a52a6"/>
<circle cx="538.0" cy="425.6" r="3.05" fill="#2a52a6"/>
<circle cx="538.7" cy="425.2" r="3.05" fill="#2a52a6"/>
<circle cx="539.5" cy="424.8" r="3.05" fill="#2a52a6"/>
<circle cx="539.5" cy="424.4" r="3.05" fill="#2a52a6"/>
<circle cx="540.5" cy="424.1" r="3.05" fill="#2a52a6"/>
<circle cx="543.1" cy="423.7" r="3.05" fill="#2a52a6"/>
<circle cx="543.8" cy="423.3" r="3.05" fill="#2a52a6"/>
<circle cx="544.1" cy="422.9" r="3.05" fill="#2a52a6"/>
<circle cx="544.1" cy="422.6" r="3.05" fill="#2a52a6"/>
<circle cx="544.1" cy="422.2" r="3.05" fill="#2a52a6"/>
<circle cx="544.1" cy="421.9" r="3.05" fill="#2a52a6"/>
<circle cx="545.2" cy="421.5" r="3.05" fill="#2a52a6"/>
<circle cx="545.9" cy="421.2" r="3.05" fill="#2a52a6"/>
<circle cx="545.9" cy="420.8" r="3.05" fill="#2a52a6"/>
<circle cx="545.9" cy="420.5" r="3.05" fill="#2a52a6"/>
<circle cx="546.7" cy="420.2" r="3.05" fill="#2a52a6"/>
<circle cx="549.5" cy="419.8" r="3.05" fill="#2a52a6"/>
<circle cx="549.5" cy="419.5" r="3.05" fill="#2a52a6"/>
<circle cx="551.3" cy="419.2" r="3.05" fill="#2a52a6"/>
<circle cx="551.3" cy="418.8" r="3.05" fill="#2a52a6"/>
<circle cx="551.3" cy="418.5" r="3.05" fill="#2a52a6"/>
<circle cx="553.1" cy="418.2" r="3.05" fill="#2a52a6"/>
<circle cx="553.1" cy="417.9" r="3.05" fill="#2a52a6"/>
<circle cx="553.1" cy="417.6" r="3.05" fill="#2a52a6"/>
<circle cx="556.7" cy="417.3" r="3.05" fill="#2a52a6"/>
<circle cx="556.7" cy="417.0" r="3.05" fill="#2a52a6"/>
<circle cx="558.5" cy="416.6" r="3.05" fill="#2a52a6"/>
<circle cx="558.5" cy="416.3" r="3.05" fill="#2a52a6"/>
<circle cx="558.5" cy="416.0" r="3.05" fill="#2a52a6"/>
<circle cx="558.5" cy="415.7" r="3.05" fill="#2a52a6"/>
<circle cx="558.5" cy="415.4" r="3.05" fill="#2a52a6"/>
<circle cx="558.5" cy="415.1" r="3.05" fill="#2a52a6"/>
<circle cx="558.5" cy="414.8" r="3.05" fill="#2a52a6"/>
<circle cx="558.5" cy="414.5" r="3.05" fill="#2a52a6"/>
<circle cx="561.0" cy="414.2" r="3.05" fill="#2a52a6"/>
<circle cx="562.1" cy="413.9" r="3.05" fill="#2a52a6"/>
<circle cx="563.9" cy="413.6" r="3.05" fill="#2a52a6"/>
<circle cx="563.9" cy="413.3" r="3.05" fill="#2a52a6"/>
<circle cx="563.9" cy="413.0" r="3.05" fill="#2a52a6"/>
<circle cx="564.6" cy="412.7" r="3.05" fill="#2a52a6"/>
<circle cx="565.7" cy="412.4" r="3.05" fill="#2a52a6"/>
<circle cx="565.7" cy="412.1" r="3.05" fill="#2a52a6"/>
<circle cx="567.5" cy="411.8" r="3.05" fill="#2a52a6"/>
<circle cx="567.5" cy="411.5" r="3.05" fill="#2a52a6"/>
<circle cx="568.2" cy="411.2" r="3.05" fill="#2a52a6"/>
<circle cx="569.3" cy="410.9" r="3.05" fill="#2a52a6"/>
<circle cx="569.3" cy="410.6" r="3.05" fill="#2a52a6"/>
<circle cx="571.1" cy="410.2" r="3.05" fill="#2a52a6"/>
<circle cx="571.1" cy="409.9" r="3.05" fill="#2a52a6"/>
<circle cx="571.1" cy="409.6" r="3.05" fill="#2a52a6"/>
<circle cx="572.9" cy="409.3" r="3.05" fill="#2a52a6"/>
<circle cx="572.9" cy="409.0" r="3.05" fill="#2a52a6"/>
<circle cx="572.9" cy="408.7" r="3.05" fill="#2a52a6"/>
<circle cx="572.9" cy="408.4" r="3.05" fill="#2a52a6"/>
<circle cx="572.9" cy="408.0" r="3.05" fill="#2a52a6"/>
<circle cx="572.9" cy="407.7" r="3.05" fill="#2a52a6"/>
<circle cx="572.9" cy="407.4" r="3.05" fill="#2a52a6"/>
<circle cx="576.5" cy="407.0" r="3.05" fill="#2a52a6"/>
<circle cx="577.6" cy="406.7" r="3.05" fill="#2a52a6"/>
<circle cx="578.3" cy="406.4" r="3.05" fill="#2a52a6"/>
<circle cx="578.3" cy="406.0" r="3.05" fill="#2a52a6"/>
<circle cx="578.3" cy="405.7" r="3.05" fill="#2a52a6"/>
<circle cx="578.3" cy="405.3" r="3.05" fill="#2a52a6"/>
<circle cx="578.3" cy="405.0" r="3.05" fill="#2a52a6"/>
<circle cx="579.0" cy="404.6" r="3.05" fill="#2a52a6"/>
<circle cx="579.0" cy="404.3" r="3.05" fill="#2a52a6"/>
<circle cx="580.1" cy="403.9" r="3.05" fill="#2a52a6"/>
<circle cx="582.6" cy="403.5" r="3.05" fill="#2a52a6"/>
<circle cx="583.7" cy="403.1" r="3.05" fill="#2a52a6"/>
<circle cx="583.7" cy="402.8" r="3.05" fill="#2a52a6"/>
<circle cx="584.4" cy="402.4" r="3.05" fill="#2a52a6"/>
<circle cx="585.5" cy="402.0" r="3.05" fill="#2a52a6"/>
<circle cx="585.5" cy="401.6" r="3.05" fill="#2a52a6"/>
<circle cx="586.2" cy="401.1" r="3.05" fill="#2a52a6"/>
<circle cx="589.1" cy="400.7" r="3.05" fill="#2a52a6"/>
<circle cx="589.1" cy="400.3" r="3.05" fill="#2a52a6"/>
<circle cx="589.1" cy="399.8" r="3.05" fill="#2a52a6"/>
<circle cx="590.9" cy="399.3" r="3.05" fill="#2a52a6"/>
<circle cx="592.7" cy="398.9" r="3.05" fill="#2a52a6"/>
<circle cx="595.5" cy="398.4" r="3.05" fill="#2a52a6"/>
<circle cx="595.5" cy="397.9" r="3.05" fill="#2a52a6"/>
<circle cx="596.3" cy="397.3" r="3.05" fill="#2a52a6"/>
<circle cx="597.0" cy="396.8" r="3.05" fill="#2a52a6"/>
<circle cx="598.1" cy="396.2" r="3.05" fill="#2a52a6"/>
<circle cx="599.1" cy="395.6" r="3.05" fill="#2a52a6"/>
<circle cx="599.1" cy="395.0" r="3.05" fill="#2a52a6"/>
<circle cx="599.9" cy="394.3" r="3.05" fill="#2a52a6"/>
<circle cx="603.5" cy="393.6" r="3.05" fill="#2a52a6"/>
<circle cx="603.5" cy="392.9" r="3.05" fill="#2a52a6"/>
<circle cx="603.5" cy="392.1" r="3.05" fill="#2a52a6"/>
<circle cx="603.5" cy="391.2" r="3.05" fill="#2a52a6"/>
<circle cx="603.5" cy="390.3" r="3.05" fill="#2a52a6"/>
<circle cx="610.6" cy="389.2" r="3.05" fill="#2a52a6"/>
<circle cx="611.4" cy="388.0" r="3.05" fill="#2a52a6"/>
<circle cx="615.3" cy="386.7" r="3.05" fill="#2a52a6"/>
<circle cx="617.8" cy="385.0" r="3.05" fill="#2a52a6"/>
<circle cx="621.4" cy="383.0" r="3.05" fill="#2a52a6"/>
<circle cx="630.4" cy="380.2" r="3.05" fill="#2a52a6"/>
<circle cx="648.4" cy="375.2" r="3.05" fill="#2a52a6"/>
</g>
<line x1="496.8" y1="460.5" x2="496.8" y2="462.9" stroke="#9a9a9a" stroke-width="0.8"/>
<text x="496.8" y="471.2" font-size="7.8" font-weight="bold" text-anchor="middle" fill="#3a3a3a" textLength="21.0" lengthAdjust="spacingAndGlyphs">73.98</text>
<line x1="557.3" y1="460.5" x2="557.3" y2="462.9" stroke="#9a9a9a" stroke-width="0.8"/>
<text x="557.3" y="471.2" font-size="7.8" font-weight="bold" text-anchor="middle" fill="#3a3a3a" textLength="21.0" lengthAdjust="spacingAndGlyphs">74.00</text>
<line x1="617.8" y1="460.5" x2="617.8" y2="462.9" stroke="#9a9a9a" stroke-width="0.8"/>
<text x="617.8" y="471.2" font-size="7.8" font-weight="bold" text-anchor="middle" fill="#3a3a3a" textLength="21.0" lengthAdjust="spacingAndGlyphs">74.02</text>
<line x1="678.3" y1="460.5" x2="678.3" y2="462.9" stroke="#9a9a9a" stroke-width="0.8"/>
<text x="678.3" y="471.2" font-size="7.8" font-weight="bold" text-anchor="middle" fill="#3a3a3a" textLength="21.0" lengthAdjust="spacingAndGlyphs">74.04</text>
<rect x="524.1" y="502.4" width="68.7" height="120.7" fill="#fff" stroke="#9a9a9a" stroke-width="1"/>
<line x1="524.1" y1="514.2" x2="592.8" y2="514.2" stroke="#9a9a9a" stroke-width="1"/>
<line x1="524.1" y1="543.3" x2="592.8" y2="543.3" stroke="#9a9a9a" stroke-width="1"/>
<line x1="524.1" y1="553.1" x2="592.8" y2="553.1" stroke="#9a9a9a" stroke-width="1"/>
<line x1="524.1" y1="584" x2="592.8" y2="584" stroke="#9a9a9a" stroke-width="1"/>
<line x1="524.1" y1="594.5" x2="592.8" y2="594.5" stroke="#9a9a9a" stroke-width="1"/>
<text x="558.5" y="511.0" font-size="10" stroke="#4a4a4a" stroke-width="0.25" text-anchor="middle" fill="#4a4a4a" textLength="36.0" lengthAdjust="spacingAndGlyphs">Overall</text>
<text x="558.5" y="550.5" font-size="10" stroke="#4a4a4a" stroke-width="0.25" text-anchor="middle" fill="#4a4a4a" textLength="31.0" lengthAdjust="spacingAndGlyphs">Within</text>
<text x="558.5" y="592.3" font-size="10" stroke="#4a4a4a" stroke-width="0.25" text-anchor="middle" fill="#4a4a4a" textLength="28.5" lengthAdjust="spacingAndGlyphs">Specs</text>
<line x1="541.4" y1="527.4" x2="578.7" y2="527.4" stroke="#4f6fcf" stroke-width="1.3"/>
<line x1="537.2" y1="527.4" x2="545.6" y2="527.4" stroke="#b0453f" stroke-width="1.3"/><line x1="541.4" y1="523.4" x2="541.4" y2="531.4" stroke="#b0453f" stroke-width="1.3"/>
<line x1="555.5" y1="527.4" x2="563.9" y2="527.4" stroke="#b0453f" stroke-width="1.3"/><line x1="559.7" y1="523.4" x2="559.7" y2="531.4" stroke="#b0453f" stroke-width="1.3"/>
<line x1="574.5" y1="527.4" x2="582.9" y2="527.4" stroke="#b0453f" stroke-width="1.3"/><line x1="578.7" y1="523.4" x2="578.7" y2="531.4" stroke="#b0453f" stroke-width="1.3"/>
<line x1="541.4" y1="567.6" x2="577.6" y2="567.6" stroke="#9cb4e4" stroke-width="2.2"/>
<line x1="537.2" y1="567.6" x2="545.6" y2="567.6" stroke="#b0453f" stroke-width="1.3"/><line x1="541.4" y1="563.6" x2="541.4" y2="571.6" stroke="#b0453f" stroke-width="1.3"/>
<line x1="555.5" y1="567.6" x2="563.9" y2="567.6" stroke="#b0453f" stroke-width="1.3"/><line x1="559.7" y1="563.6" x2="559.7" y2="571.6" stroke="#b0453f" stroke-width="1.3"/>
<line x1="573.4" y1="567.6" x2="581.8" y2="567.6" stroke="#b0453f" stroke-width="1.3"/><line x1="577.6" y1="563.6" x2="577.6" y2="571.6" stroke="#b0453f" stroke-width="1.3"/>
<line x1="528.6" y1="608.5" x2="589.9" y2="608.5" stroke="#4f6fcf" stroke-width="1.3"/>
<line x1="524.4" y1="608.5" x2="532.8" y2="608.5" stroke="#b0453f" stroke-width="1.3"/><line x1="528.6" y1="604.5" x2="528.6" y2="612.5" stroke="#b0453f" stroke-width="1.3"/>
<line x1="555.5" y1="608.5" x2="563.9" y2="608.5" stroke="#b0453f" stroke-width="1.3"/><line x1="559.7" y1="604.5" x2="559.7" y2="612.5" stroke="#b0453f" stroke-width="1.3"/>
<line x1="585.7" y1="608.5" x2="594.1" y2="608.5" stroke="#b0453f" stroke-width="1.3"/><line x1="589.9" y1="604.5" x2="589.9" y2="612.5" stroke="#b0453f" stroke-width="1.3"/>
<text x="472.7" y="514.5" font-size="10" text-anchor="middle" fill="#333" textLength="30.6" lengthAdjust="spacingAndGlyphs">Within</text>
<text x="432.6" y="525.5" font-size="10.3" text-anchor="start" fill="#333">StDev</text>
<text x="476.4" y="525.5" font-size="10.3" text-anchor="start" fill="#333" textLength="34.8" lengthAdjust="spacingAndGlyphs">0.01005</text>
<text x="432.6" y="536.3" font-size="10.3" text-anchor="start" fill="#333">Cp</text>
<text x="476.4" y="536.3" font-size="10.3" text-anchor="start" fill="#333" textLength="18.4" lengthAdjust="spacingAndGlyphs">1.66</text>
<text x="432.6" y="547.1" font-size="10.3" text-anchor="start" fill="#333">Cpk</text>
<text x="476.4" y="547.1" font-size="10.3" text-anchor="start" fill="#333" textLength="18.4" lengthAdjust="spacingAndGlyphs">1.62</text>
<text x="432.6" y="557.9" font-size="10.3" text-anchor="start" fill="#333">PPM</text>
<text x="476.4" y="557.9" font-size="10.3" text-anchor="start" fill="#333" textLength="18.4" lengthAdjust="spacingAndGlyphs">0.77</text>
<text x="644.7" y="514.5" font-size="10" text-anchor="middle" fill="#333" textLength="35.1" lengthAdjust="spacingAndGlyphs">Overall</text>
<text x="604.8" y="525.5" font-size="10.3" text-anchor="start" fill="#333">StDev</text>
<text x="648.9" y="525.5" font-size="10.3" text-anchor="start" fill="#333" textLength="34.5" lengthAdjust="spacingAndGlyphs">0.01020</text>
<text x="604.8" y="536.3" font-size="10.3" text-anchor="start" fill="#333">Pp</text>
<text x="648.9" y="536.3" font-size="10.3" text-anchor="start" fill="#333" textLength="17.8" lengthAdjust="spacingAndGlyphs">1.63</text>
<text x="604.8" y="547.1" font-size="10.3" text-anchor="start" fill="#333">Ppk</text>
<text x="648.9" y="547.1" font-size="10.3" text-anchor="start" fill="#333" textLength="17.8" lengthAdjust="spacingAndGlyphs">1.60</text>
<text x="604.8" y="557.9" font-size="10.3" text-anchor="start" fill="#333">Cpm</text>
<text x="648.9" y="557.9" font-size="10.3" text-anchor="start" fill="#333" textLength="17.8" lengthAdjust="spacingAndGlyphs">1.63</text>
<text x="604.8" y="568.6" font-size="10.3" text-anchor="start" fill="#333">PPM</text>
<text x="648.9" y="568.6" font-size="10.3" text-anchor="start" fill="#333" textLength="17.8" lengthAdjust="spacingAndGlyphs">1.11</text>
</svg></body></html>
